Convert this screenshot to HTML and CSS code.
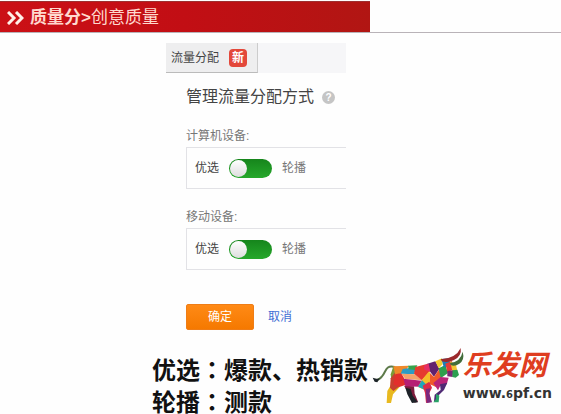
FILE: index.html
```
<!DOCTYPE html>
<html lang="zh-CN">
<head>
    <meta charset="UTF-8">
    <meta name="viewport" content="width=device-width, initial-scale=1.0">
    <title>创意质量</title>
    <link rel="stylesheet" href="styles.css">
</head>
<body>
    <header class="header">
        <h1 class="header-title">
            <svg class="chevrons" viewBox="0 0 17 14" width="17" height="14" aria-hidden="true">
                <path d="M1 1l6 6-6 6M9 1l6 6-6 6"/>
            </svg>
            <span><b>质量分&gt;</b>创意质量</span>
        </h1>
    </header>

    <main class="panel">
        <nav class="tabs">
            <button class="tab" type="button">流量分配<span class="new-badge">新</span></button>
        </nav>
        <form class="settings">
            <h2 class="settings-title">管理流量分配方式<span class="help">?</span></h2>

            <div class="device-label">计算机设备:</div>
            <div class="device-box">
                <label class="strong" for="desktop">优选</label>
                <input class="switch" type="checkbox" id="desktop">
                <label for="desktop">轮播</label>
            </div>

            <div class="device-label">移动设备:</div>
            <div class="device-box">
                <label class="strong" for="mobile">优选</label>
                <input class="switch" type="checkbox" id="mobile">
                <label for="mobile">轮播</label>
            </div>

            <div class="actions">
                <button class="confirm" type="button">确定</button>
                <a class="cancel" href="#">取消</a>
            </div>
        </form>
    </main>

    <footer class="footer">
        <div class="notes">
            <p>优选<span class="colon" lang="zh-TW">：</span>爆款、热销款</p>
            <p>轮播<span class="colon" lang="zh-TW">：</span>测款</p>
        </div>
        <div class="brand">
            <svg class="bull" viewBox="25 9 270 174" width="90" height="58" aria-hidden="true">
                <!-- tail -->
                <path fill="none" stroke="#5d7a4a" stroke-width="6" d="M90 66C62 58 64 82 52 94C46 102 40 106 32 105"/>
                <path fill="#1c2428" d="M24 98l14 4 8-3-8 13-8-2z"/>
                <!-- hind legs -->
                <path fill="#7c9a35" d="M86 64l-8 24 4 32 14-20 4-34z"/>
                <path fill="#e8b91f" d="M80 118l-12 20-2 36h13l6-26 20-22z"/>
                <path fill="#c8402f" d="M78 100l-2 28 10 10 24-18-4-32-16-4z"/>
                <path fill="#7c1c3c" d="M118 122l30 2 2 22 10 24-10 3-22-34z"/>
                <path fill="#1d2228" d="M122 128l16 4 6 20 16 20-18 2-14-26z"/>
                <!-- body -->
                <path fill="#f0892a" d="M86 64l46-2-10 20-30 8z"/>
                <path fill="#e32f2c" d="M92 88l18-4 18 34-24 8-18-8z"/>
                <path fill="#2c9cc4" d="M114 72l42-6-8 22-40-2z"/>
                <path fill="#37a34b" d="M130 62l28-1-6 14-20-2z"/>
                <path fill="#f6a36a" d="M110 86l40 2 24 18-52-4z"/>
                <path fill="#b51e73" d="M116 101l56 6-10 18-40-1z"/>
                <path fill="#e63a2f" d="M152 66l38-10 6 22-24 28-24-20z"/>
                <path fill="#f5bd28" d="M172 104l22-26 8 30-24 26-18-8z"/>
                <path fill="#20a6ba" d="M160 125l12-19 12 12-4 16z"/>
                <path fill="#62216d" d="M188 56l24-7 12 22-16 24-14-18z"/>
                <path fill="#e52d68" d="M178 62l14-6 5 24-18-6z"/>
                <path fill="#f4cb32" d="M212 49l20-9 2 18-12 12z"/>
                <path fill="#f05a2b" d="M196 84l12 12 16-24 6 30-16 24-18-8z"/>
                <path fill="#2f9f4d" d="M222 70l20-10 8 24-22 16z"/>
                <!-- front legs -->
                <path fill="#dc2c49" d="M174 122l20-12 8 18-8 16 6 26-16 4-3-30z"/>
                <path fill="#7b277e" d="M183 132l14-2-3 16 8 26-16 2z"/>
                <path fill="#b92579" d="M206 114l22-18 24 2-6 20-20 6-6 12z"/>
                <path fill="#4f2a74" d="M226 118l22-5-10 22-16 16-2 18h-12l2-20 18-14z"/>
                <path fill="#29a268" d="M214 146l10 6-2 20h-16l8-10z"/>
                <!-- head -->
                <path fill="#1c7fb8" d="M230 42l22-2 6 18-20 10z"/>
                <path fill="#e43c36" d="M242 56l20-8 4 26-18 8z"/>
                <path fill="#f3c334" d="M256 48l18 12 4 18-14 4z"/>
                <path fill="#7a2875" d="M248 78l18-2-2 20-16-2z"/>
                <path fill="#2b9f50" d="M264 76l14-2 5 16-10 8-10-2z"/>
                <!-- horns -->
                <path fill="#9b292c" d="M228 43q46-3 60-34 4 24-20 36-18 9-36 4z"/>
                <path fill="#426d3b" d="M256 54q32-4 38-34 7 24-10 36-14 10-26 4z"/>
            </svg>
            <div class="brand-name">
                <strong>乐发网</strong>
                <span>www.<small>6</small>pf.cn</span>
            </div>
        </div>
    </footer>
</body>
</html>
```
FILE: styles.css
```
* {
    margin: 0;
    padding: 0;
    box-sizing: border-box;
}

body {
    background: #fefefe;
    color: #555;
    font-family: "Liberation Sans", "Noto Sans CJK SC", sans-serif;
    font-size: 12px;
    line-height: 18px;
}

button,
input {
    font: inherit;
}

.header {
    padding-top: 1px;
    border-bottom: 1px solid #b9b3b8;
}

.header-title {
    display: flex;
    align-items: center;
    gap: 6px;
    width: 66%;
    height: 31px;
    padding: 1px 0 0 7px;
    background: linear-gradient(90deg, #cb1016, #c20e14 50%, #b11613);
    border-top: 1px solid #9e3030;
    color: #ffd9cf;
    font-size: 17px;
    font-weight: normal;
    line-height: 24px;
}

.chevrons {
    fill: none;
    stroke: #fff0e8;
    stroke-width: 3;
}

.panel {
    width: 32%;
    margin: 10px 0 0 166px;
}

.tabs {
    background: #f6f6f8;
}

.tab {
    display: flex;
    align-items: center;
    gap: 10px;
    height: 30px;
    padding: 0 10px 0 5px;
    background: #eeeeef;
    border: 0;
    border-right: 1px solid #ccc;
    border-bottom: 1px solid #bbb;
    color: #444;
}

.new-badge {
    width: 18px;
    background: #e3483a;
    border-radius: 4px;
    color: #fff;
    font-weight: bold;
}

.settings {
    padding: 12px 0 0 20px;
}

.settings-title {
    display: flex;
    align-items: center;
    gap: 8px;
    margin-bottom: 18px;
    color: #444;
    font-size: 16px;
    font-weight: normal;
    line-height: 24px;
}

.help {
    width: 13px;
    background: #c5c5c5;
    border-radius: 50%;
    color: #fff;
    font-size: 10px;
    font-weight: bold;
    line-height: 13px;
    text-align: center;
}

.device-label {
    margin-bottom: 2px;
    color: #777;
}

.device-box {
    display: flex;
    align-items: center;
    gap: 10px;
    height: 42px;
    margin-bottom: 19px;
    padding: 0 8px;
    border: 1px solid #e2e2e6;
    border-right: 0;
    color: #777;
}

.strong {
    color: #444;
}

.switch {
    appearance: none;
    display: flex;
    width: 43px;
    height: 19px;
    background: linear-gradient(#16851c, #26a82b);
    border-radius: 10px;
    cursor: pointer;
}

.switch::before {
    content: "";
    width: 17px;
    height: 17px;
    margin: 1px;
    background: linear-gradient(#fff, #ddd);
    border-radius: 50%;
}

.switch:checked {
    justify-content: flex-end;
}

.actions {
    display: flex;
    align-items: center;
    gap: 14px;
    padding-top: 15px;
}

.confirm {
    width: 68px;
    height: 26px;
    background: linear-gradient(#ff8a16, #f57900);
    border: 1px solid #ef7d16;
    border-radius: 2px;
    color: #fff;
}

.cancel {
    color: #3e70d4;
    text-decoration: none;
}

.footer {
    display: flex;
    justify-content: space-between;
    padding: 18px 9px 0 152px;
}

.notes {
    padding-top: 6px;
    color: #111;
    font-size: 24px;
    font-weight: bold;
    line-height: 30px;
    white-space: nowrap;
}

.colon {
    font-family: "Noto Sans CJK TC", sans-serif;
}

.brand {
    display: flex;
    align-items: flex-start;
}

.bull {
    overflow: visible;
}

.brand-name {
    display: flex;
    flex-direction: column;
    color: #333;
}

.brand-name strong {
    color: #df3d20;
    font-size: 28px;
    font-style: italic;
    line-height: 36px;
}

.brand-name span {
    font-family: "DejaVu Sans", sans-serif;
    font-size: 14px;
    font-weight: bold;
}

.brand-name small {
    font-size: 10px;
}
```
